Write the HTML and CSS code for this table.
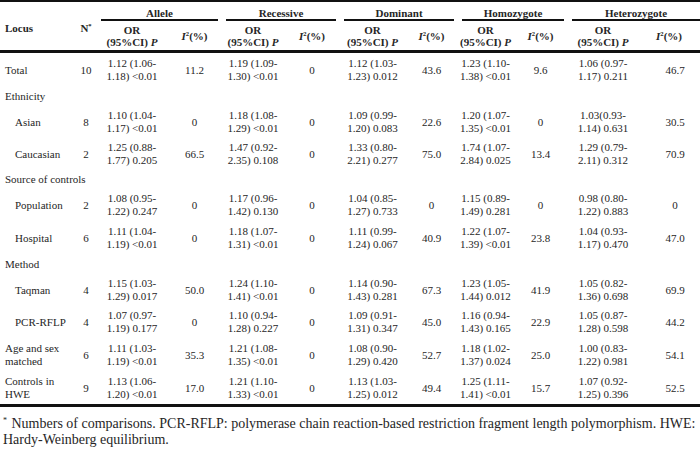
FILE: index.html
```html
<!DOCTYPE html>
<html>
<head>
<meta charset="utf-8">
<link rel="stylesheet" href="styles.css">
</head>
<body>
<table class="t">
  <colgroup>
    <col class="c-locus"><col class="c-n">
    <col class="c-aor"><col class="c-ai">
    <col class="c-ror"><col class="c-ri">
    <col class="c-dor"><col class="c-di">
    <col class="c-hor"><col class="c-hi">
    <col class="c-tor"><col class="c-ti">
  </colgroup>
  <thead>
    <tr class="grp">
      <th rowspan="2" class="locus">Locus</th>
      <th rowspan="2" class="nh">N<sup>*</sup></th>
      <th colspan="2"><div class="ul">Allele</div></th>
      <th colspan="2"><div class="ul">Recessive</div></th>
      <th colspan="2"><div class="ul">Dominant</div></th>
      <th colspan="2"><div class="ul">Homozygote</div></th>
      <th colspan="2"><div class="ul last">Heterozygote</div></th>
    </tr>
    <tr class="sub">
      <th>OR<br>(95%CI) <i>P</i></th><th><i>I</i><sup>2</sup>(%)</th>
      <th>OR<br>(95%CI) <i>P</i></th><th><i>I</i><sup>2</sup>(%)</th>
      <th>OR<br>(95%CI) <i>P</i></th><th><i>I</i><sup>2</sup>(%)</th>
      <th>OR<br>(95%CI) <i>P</i></th><th><i>I</i><sup>2</sup>(%)</th>
      <th>OR<br>(95%CI) <i>P</i></th><th class="hl"><i>I</i><sup>2</sup>(%)</th>
    </tr>
  </thead>
  <tbody>
    <tr class="two tall">
      <td class="lab">Total</td><td>10</td>
      <td>1.12 (1.06-<br>1.18) &lt;0.01</td><td>11.2</td>
      <td>1.19 (1.09-<br>1.30) &lt;0.01</td><td>0</td>
      <td>1.12 (1.03-<br>1.23) 0.012</td><td>43.6</td>
      <td>1.23 (1.10-<br>1.38) &lt;0.01</td><td>9.6</td>
      <td>1.06 (0.97-<br>1.17) 0.211</td><td class="l">46.7</td>
    </tr>
    <tr class="cat"><td colspan="12">Ethnicity</td></tr>
    <tr class="two">
      <td class="lab sublab">Asian</td><td>8</td>
      <td>1.10 (1.04-<br>1.17) &lt;0.01</td><td>0</td>
      <td>1.18 (1.08-<br>1.29) &lt;0.01</td><td>0</td>
      <td>1.09 (0.99-<br>1.20) 0.083</td><td>22.6</td>
      <td>1.20 (1.07-<br>1.35) &lt;0.01</td><td>0</td>
      <td>1.03(0.93-<br>1.14) 0.631</td><td class="l">30.5</td>
    </tr>
    <tr class="two">
      <td class="lab sublab">Caucasian</td><td>2</td>
      <td>1.25 (0.88-<br>1.77) 0.205</td><td>66.5</td>
      <td>1.47 (0.92-<br>2.35) 0.108</td><td>0</td>
      <td>1.33 (0.80-<br>2.21) 0.277</td><td>75.0</td>
      <td>1.74 (1.07-<br>2.84) 0.025</td><td>13.4</td>
      <td>1.29 (0.79-<br>2.11) 0.312</td><td class="l">70.9</td>
    </tr>
    <tr class="cat"><td colspan="12">Source of controls</td></tr>
    <tr class="two">
      <td class="lab sublab">Population</td><td>2</td>
      <td>1.08 (0.95-<br>1.22) 0.247</td><td>0</td>
      <td>1.17 (0.96-<br>1.42) 0.130</td><td>0</td>
      <td>1.04 (0.85-<br>1.27) 0.733</td><td>0</td>
      <td>1.15 (0.89-<br>1.49) 0.281</td><td>0</td>
      <td>0.98 (0.80-<br>1.22) 0.883</td><td class="l">0</td>
    </tr>
    <tr class="two tall">
      <td class="lab sublab">Hospital</td><td>6</td>
      <td>1.11 (1.04-<br>1.19) &lt;0.01</td><td>0</td>
      <td>1.18 (1.07-<br>1.31) &lt;0.01</td><td>0</td>
      <td>1.11 (0.99-<br>1.24) 0.067</td><td>40.9</td>
      <td>1.22 (1.07-<br>1.39) &lt;0.01</td><td>23.8</td>
      <td>1.04 (0.93-<br>1.17) 0.470</td><td class="l">47.0</td>
    </tr>
    <tr class="cat"><td colspan="12">Method</td></tr>
    <tr class="two">
      <td class="lab sublab">Taqman</td><td>4</td>
      <td>1.15 (1.03-<br>1.29) 0.017</td><td>50.0</td>
      <td>1.24 (1.10-<br>1.41) &lt;0.01</td><td>0</td>
      <td>1.14 (0.90-<br>1.43) 0.281</td><td>67.3</td>
      <td>1.23 (1.05-<br>1.44) 0.012</td><td>41.9</td>
      <td>1.05 (0.82-<br>1.36) 0.698</td><td class="l">69.9</td>
    </tr>
    <tr class="two">
      <td class="lab sublab">PCR-RFLP</td><td>4</td>
      <td>1.07 (0.97-<br>1.19) 0.177</td><td>0</td>
      <td>1.10 (0.94-<br>1.28) 0.227</td><td>0</td>
      <td>1.09 (0.91-<br>1.31) 0.347</td><td>45.0</td>
      <td>1.16 (0.94-<br>1.43) 0.165</td><td>22.9</td>
      <td>1.05 (0.87-<br>1.28) 0.598</td><td class="l">44.2</td>
    </tr>
    <tr class="two tall">
      <td class="lab">Age and sex<br>matched</td><td>6</td>
      <td>1.11 (1.03-<br>1.19) &lt;0.01</td><td>35.3</td>
      <td>1.21 (1.08-<br>1.35) &lt;0.01</td><td>0</td>
      <td>1.08 (0.90-<br>1.29) 0.420</td><td>52.7</td>
      <td>1.18 (1.02-<br>1.37) 0.024</td><td>25.0</td>
      <td>1.00 (0.83-<br>1.22) 0.981</td><td class="l">54.1</td>
    </tr>
    <tr class="two">
      <td class="lab">Controls in<br>HWE</td><td>9</td>
      <td>1.13 (1.06-<br>1.20) &lt;0.01</td><td>17.0</td>
      <td>1.21 (1.10-<br>1.33) &lt;0.01</td><td>0</td>
      <td>1.13 (1.03-<br>1.25) 0.012</td><td>49.4</td>
      <td>1.25 (1.11-<br>1.41) &lt;0.01</td><td>15.7</td>
      <td>1.07 (0.92-<br>1.25) 0.396</td><td class="l">52.5</td>
    </tr>
  </tbody>
</table>
<p class="note"><span class="ast">*</span> Numbers of comparisons. PCR-RFLP: polymerase chain reaction-based restriction fragment length polymorphism. HWE: Hardy-Weinberg equilibrium.</p>
</body>
</html>
```
FILE: styles.css
```css
html, body {
  margin: 0;
  padding: 0;
  background: #ffffff;
}
body {
  font-family: "Liberation Serif", "Times New Roman", serif;
  color: #262626;
  width: 700px;
  overflow: hidden;
}
.t {
  width: 700px;
  table-layout: fixed;
  border-collapse: collapse;
  border-top: 2px solid #111;
  font-size: 11px;
}
.c-locus { width: 75px; }
.c-n { width: 22px; }
.c-aor { width: 70px; }
.c-ai { width: 55px; }
.c-ror { width: 62px; }
.c-ri { width: 56px; }
.c-dor { width: 65px; }
.c-di { width: 53px; }
.c-hor { width: 55px; }
.c-hi { width: 55px; }
.c-tor { width: 70px; }
.c-ti { width: 62px; }

th, td {
  padding: 0;
  text-align: center;
  vertical-align: middle;
}
th {
  font-weight: bold;
  line-height: 12px;
}
sup {
  font-size: 0.6em;
  line-height: 0;
  vertical-align: 0.55em;
}
.grp th {
  height: 19px;
  vertical-align: top;
}
.grp th.locus, .grp th.nh {
  vertical-align: middle;
  padding-top: 3px;
}
.locus {
  text-align: left;
  padding-left: 5px;
}
.ul {
  margin: 0 4px;
  padding-top: 5px;
  height: 12px;
  border-bottom: 2px solid #111;
}
.ul.last {
  margin-right: 0;
}
.sub th {
  height: 29px;
}
thead {
  border-bottom: 3px solid #111;
}
tbody {
  border-bottom: 3px solid #111;
}
td {
  line-height: 13px;
}
tr.two td {
  height: 32px;
}
tr.two.tall td {
  height: 34px;
}
tr.cat td {
  height: 19px;
  text-align: left;
  padding-left: 5px;
}
td.lab {
  text-align: left;
  padding-left: 5px;
}
td.sublab {
  padding-left: 15px;
}
td.l {
  padding-left: 12px;
}
th.hl {
  padding-left: 0;
}
.note {
  margin: 9px 0 0 3px;
  font-size: 14px;
  line-height: 16px;
  color: #262626;
}
.ast {
  display: inline-block;
  font-size: 8px;
  line-height: 8px;
  vertical-align: top;
  margin-top: 1px;
  margin-right: 1px;
}
```
